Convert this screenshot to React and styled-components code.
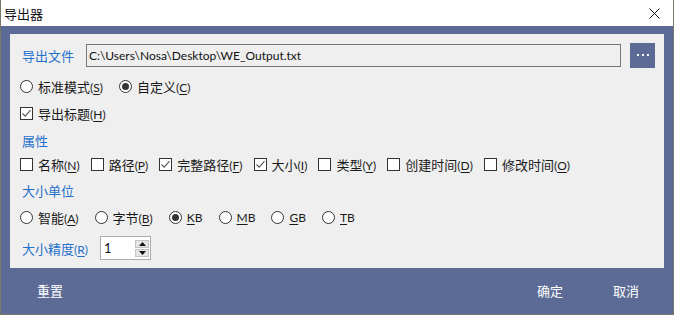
import styled, { createGlobalStyle } from "styled-components";

const GlobalStyle = createGlobalStyle`
  body {
    margin: 0;
    background: #4b4b40;
    font-family: Lato, "Noto Sans CJK SC", sans-serif;
  }
  * { box-sizing: border-box; }
`;

const checkItems = [
  { label: "名称", key: "N", checked: false },
  { label: "路径", key: "P", checked: false },
  { label: "完整路径", key: "F", checked: true },
  { label: "大小", key: "I", checked: true },
  { label: "类型", key: "Y", checked: false },
  { label: "创建时间", key: "D", checked: false },
  { label: "修改时间", key: "O", checked: false },
];

const unitItems = [
  { label: "智能", key: "A", checked: false },
  { label: "字节", key: "B", checked: false },
  { label: "", key: "K", rest: "B", checked: true },
  { label: "", key: "M", rest: "B", checked: false },
  { label: "", key: "G", rest: "B", checked: false },
  { label: "", key: "T", rest: "B", checked: false },
];

function Label({ text, accel, rest }) {
  if (rest) {
    return (
      <Caption>
        <u>{accel}</u>
        {rest}
      </Caption>
    );
  }
  return (
    <Caption>
      <Han>{text}</Han>(<u>{accel}</u>)
    </Caption>
  );
}

function Radio({ checked, children }) {
  return (
    <Option>
      <RadioDot $checked={checked} />
      {children}
    </Option>
  );
}

function Check({ checked, children }) {
  return (
    <Option>
      <CheckBox>
        {checked && (
          <svg width="11" height="11" viewBox="0 0 11 11">
            <path d="M1.5 5.5 L4.2 8.2 L9.5 2.2" fill="none" stroke="#555" strokeWidth="1.1" />
          </svg>
        )}
      </CheckBox>
      {children}
    </Option>
  );
}

export default function App() {
  return (
    <>
      <GlobalStyle />
      <Window>
        <TitleBar>
          <Title>导出器</Title>
          <CloseButton>
            <svg width="11" height="11" viewBox="0 0 11 11">
              <path d="M0.5 0.5 L10.5 10.5 M10.5 0.5 L0.5 10.5" stroke="#111" strokeWidth="1" />
            </svg>
          </CloseButton>
        </TitleBar>
        <Body>
          <Panel>
            <FileRow>
              <BlueLabel $width="66px">导出文件</BlueLabel>
              <PathBox>C:\Users\Nosa\Desktop\WE_Output.txt</PathBox>
              <BrowseButton>
                <svg width="12" height="3" viewBox="0 0 12 3">
                  <rect x="0" y="0" width="2" height="2" fill="#fff" />
                  <rect x="5" y="0" width="2" height="2" fill="#fff" />
                  <rect x="10" y="0" width="2" height="2" fill="#fff" />
                </svg>
              </BrowseButton>
            </FileRow>
            <Row $mt="8px" $gap="16px">
              <Radio checked={false}>
                <Label text="标准模式" accel="S" />
              </Radio>
              <Radio checked>
                <Label text="自定义" accel="C" />
              </Radio>
            </Row>
            <Row $mt="7px">
              <Check checked>
                <Label text="导出标题" accel="H" />
              </Check>
            </Row>
            <Row $mt="7px">
              <BlueLabel>属性</BlueLabel>
            </Row>
            <Row $mt="4px" $gap="11px">
              {checkItems.map((it) => (
                <Check key={it.key} checked={it.checked}>
                  <Label text={it.label} accel={it.key} />
                </Check>
              ))}
            </Row>
            <Row $mt="6px">
              <BlueLabel>大小单位</BlueLabel>
            </Row>
            <Row $mt="7px" $gap="16px">
              {unitItems.map((it) => (
                <Radio key={it.key} checked={it.checked}>
                  <Label text={it.label} accel={it.key} rest={it.rest} />
                </Radio>
              ))}
            </Row>
            <SpinRow>
              <BlueLabel $width="80px">
                大小精度<Latin>(<u>R</u>)</Latin>
              </BlueLabel>
              <SpinBox>
                <SpinValue>1</SpinValue>
                <SpinButtons>
                  <SpinArrow>
                    <svg width="7" height="4" viewBox="0 0 7 4">
                      <path d="M0 4 L3.5 0 L7 4 Z" fill="#111" />
                    </svg>
                  </SpinArrow>
                  <SpinArrow>
                    <svg width="7" height="4" viewBox="0 0 7 4">
                      <path d="M0 0 L3.5 4 L7 0 Z" fill="#111" />
                    </svg>
                  </SpinArrow>
                </SpinButtons>
              </SpinBox>
            </SpinRow>
          </Panel>
          <Footer>
            <FooterButton>重置</FooterButton>
            <FooterGroup>
              <FooterButton>确定</FooterButton>
              <FooterButton>取消</FooterButton>
            </FooterGroup>
          </Footer>
        </Body>
      </Window>
    </>
  );
}

const Window = styled.div`
  width: 674px;
  height: 315px;
  display: flex;
  flex-direction: column;
  border: 1px solid #77776a;
  border-top: none;
  background: #5c6b96;
`;

const TitleBar = styled.div`
  height: 26px;
  flex: none;
  background: #fff;
  display: flex;
  align-items: center;
  justify-content: space-between;
  padding: 0 0 0 3px;
`;

const Title = styled.span`
  font-size: 13px;
  color: #111;
`;

const CloseButton = styled.div`
  width: 46px;
  height: 26px;
  display: flex;
  align-items: center;
  justify-content: center;
  margin-right: -4px;
`;

const Body = styled.div`
  flex: 1;
  display: flex;
  flex-direction: column;
  padding: 8px 9px 0 9px;
`;

const Panel = styled.div`
  height: 234px;
  background: #efefef;
  display: flex;
  flex-direction: column;
  padding: 9px 9px 0 10px;
`;

const Row = styled.div`
  height: 20px;
  display: flex;
  align-items: center;
  gap: ${(p) => p.$gap || "0"};
  margin-top: ${(p) => p.$mt || "0"};
`;

const FileRow = styled.div`
  height: 25px;
  display: flex;
  align-items: center;
`;

const BlueLabel = styled.span`
  color: #1f6fcb;
  font-size: 13px;
  padding-left: 2px;
  width: ${(p) => p.$width || "auto"};
  flex: none;
  white-space: nowrap;
  u {
    text-decoration-thickness: 1px;
    text-underline-offset: 2px;
  }
`;

const Latin = styled.span`
  font-size: 12px;
`;

const PathBox = styled.div`
  flex: 1;
  height: 23px;
  border: 1px solid #777;
  background: #efefef;
  font-size: 12px;
  color: #111;
  display: flex;
  align-items: center;
  padding-left: 2px;
  white-space: nowrap;
`;

const BrowseButton = styled.div`
  width: 25px;
  height: 25px;
  margin-left: 9px;
  background: #5c6b96;
  display: flex;
  align-items: center;
  justify-content: center;
  flex: none;
`;

const Option = styled.label`
  display: flex;
  align-items: center;
  gap: 5px;
`;

const Caption = styled.span`
  font-size: 12px;
  color: #1a1a1a;
  white-space: nowrap;
  u {
    text-decoration-thickness: 1px;
    text-underline-offset: 2px;
  }
`;

const Han = styled.span`
  font-size: 13px;
`;

const RadioDot = styled.span`
  width: 13px;
  height: 13px;
  border-radius: 50%;
  border: 1px solid #333;
  background: #fff;
  flex: none;
  display: flex;
  align-items: center;
  justify-content: center;
  &::after {
    content: "";
    width: 7px;
    height: 7px;
    border-radius: 50%;
    background: ${(p) => (p.$checked ? "#333" : "transparent")};
  }
`;

const CheckBox = styled.span`
  width: 13px;
  height: 13px;
  border: 1px solid #333;
  background: #fff;
  flex: none;
  display: flex;
  align-items: center;
  justify-content: center;
`;

const SpinRow = styled.div`
  height: 24px;
  margin-top: 9px;
  display: flex;
  align-items: center;
`;

const SpinBox = styled.div`
  width: 51px;
  height: 24px;
  border: 1px solid #acacac;
  background: #fff;
  display: flex;
  align-items: center;
  justify-content: space-between;
  padding: 0 1px 0 3px;
`;

const SpinValue = styled.span`
  font-size: 13px;
  color: #111;
`;

const SpinButtons = styled.div`
  display: flex;
  flex-direction: column;
  gap: 1px;
`;

const SpinArrow = styled.div`
  width: 14px;
  height: 8px;
  background: #e6e6e6;
  border: 1px solid #c4c4c4;
  display: flex;
  align-items: center;
  justify-content: center;
`;

const Footer = styled.div`
  flex: 1;
  display: flex;
  align-items: center;
  justify-content: space-between;
  padding: 0 0 2px 2px;
`;

const FooterGroup = styled.div`
  display: flex;
`;

const FooterButton = styled.div`
  width: 76px;
  text-align: center;
  font-size: 13px;
  color: #fff;
`;
